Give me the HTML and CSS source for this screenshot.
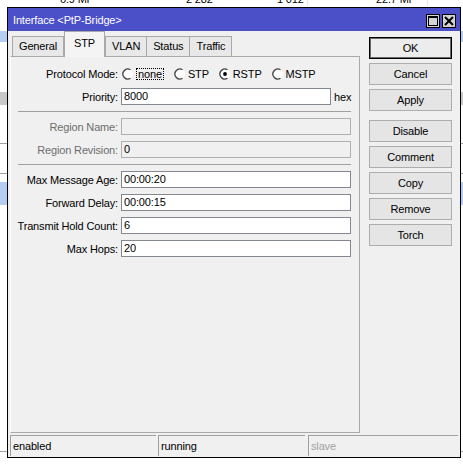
FILE: index.html
```html
<!DOCTYPE html>
<html>
<head>
    <title>Interface &lt;PtP-Bridge&gt;</title>
    <link rel="stylesheet" href="styles.css">
</head>

<body>

    <!-- interface list behind the dialog -->
    <div class="desk">
        <div class="desk-row desk-head">
            <span class="cell c1">6.9 Mi</span>
            <span class="cell c2">2 282</span>
            <span class="cell c3">1 012</span>
            <span class="cell c4">22.7 Mi</span>
        </div>
        <div class="desk-row gap-25"></div>
        <div class="desk-row band-blue h-11"></div>
        <div class="desk-row gap-50"></div>
        <div class="desk-row band-gray h-13"></div>
        <div class="desk-row gap-38 lined"></div>
        <div class="desk-row gap-29 lined"></div>
        <div class="desk-row gap-8"></div>
        <div class="desk-row band-blue h-23"></div>
        <div class="desk-row gap-246 lined"></div>
    </div>

    <div class="window">
        <div class="titlebar">
            <span class="title">Interface &lt;PtP-Bridge&gt;</span>
            <div class="title-buttons">
                <span class="tbtn">
                    <svg width="10" height="10" viewBox="0 0 10 10">
                        <rect x="0.5" y="0.5" width="9" height="9" fill="none" stroke="#000" stroke-width="1"/>
                        <rect x="0" y="0" width="10" height="2" fill="#000"/>
                    </svg>
                </span>
                <span class="tbtn">
                    <svg width="10" height="10" viewBox="0 0 10 10">
                        <path d="M1 1 L9 9 M9 1 L1 9" stroke="#000" stroke-width="2" fill="none"/>
                    </svg>
                </span>
            </div>
        </div>

        <div class="main">
            <div class="tabs-area">
                <div class="tabs">
                    <span class="tab">General</span>
                    <span class="tab active">STP</span>
                    <span class="tab">VLAN</span>
                    <span class="tab">Status</span>
                    <span class="tab">Traffic</span>
                </div>

                <div class="panel">
                    <div class="row">
                        <label class="lbl">Protocol Mode:</label>
                        <div class="radios">
                            <span class="opt">
                                <svg class="radio" width="12" height="12" viewBox="0 0 12 12">
                                    <circle cx="6" cy="6" r="5" fill="#fff"/>
                                    <path d="M8.5 1.7 A5 5 0 1 0 8.5 10.3" stroke="#444" stroke-width="1.3" fill="none"/>
                                </svg>
                                <span class="focus">none</span>
                            </span>
                            <span class="opt">
                                <svg class="radio" width="12" height="12" viewBox="0 0 12 12">
                                    <circle cx="6" cy="6" r="5" fill="#fff"/>
                                    <path d="M8.5 1.7 A5 5 0 1 0 8.5 10.3" stroke="#444" stroke-width="1.3" fill="none"/>
                                </svg>
                                STP
                            </span>
                            <span class="opt">
                                <svg class="radio" width="12" height="12" viewBox="0 0 12 12">
                                    <circle cx="6" cy="6" r="5" fill="#fff"/>
                                    <path d="M8.5 1.7 A5 5 0 1 0 8.5 10.3" stroke="#444" stroke-width="1.3" fill="none"/>
                                    <circle cx="6" cy="6" r="1.9" fill="#000"/>
                                </svg>
                                RSTP
                            </span>
                            <span class="opt">
                                <svg class="radio" width="12" height="12" viewBox="0 0 12 12">
                                    <circle cx="6" cy="6" r="5" fill="#fff"/>
                                    <path d="M8.5 1.7 A5 5 0 1 0 8.5 10.3" stroke="#444" stroke-width="1.3" fill="none"/>
                                </svg>
                                MSTP
                            </span>
                        </div>
                    </div>

                    <div class="row">
                        <label class="lbl">Priority:</label>
                        <div class="field short">8000</div>
                        <span class="unit">hex</span>
                    </div>

                    <div class="sep"></div>

                    <div class="row">
                        <label class="lbl disabled">Region Name:</label>
                        <div class="field off"></div>
                    </div>
                    <div class="row">
                        <label class="lbl disabled">Region Revision:</label>
                        <div class="field off">0</div>
                    </div>

                    <div class="sep"></div>

                    <div class="row">
                        <label class="lbl">Max Message Age:</label>
                        <div class="field">00:00:20</div>
                    </div>
                    <div class="row">
                        <label class="lbl">Forward Delay:</label>
                        <div class="field">00:00:15</div>
                    </div>
                    <div class="row">
                        <label class="lbl">Transmit Hold Count:</label>
                        <div class="field">6</div>
                    </div>
                    <div class="row">
                        <label class="lbl">Max Hops:</label>
                        <div class="field">20</div>
                    </div>
                </div>
            </div>

            <div class="buttons">
                <button class="btn default">OK</button>
                <button class="btn">Cancel</button>
                <button class="btn">Apply</button>
                <button class="btn spaced">Disable</button>
                <button class="btn">Comment</button>
                <button class="btn">Copy</button>
                <button class="btn">Remove</button>
                <button class="btn">Torch</button>
            </div>
        </div>

        <div class="statusbar">
            <div class="status s1">enabled</div>
            <div class="status s2">running</div>
            <div class="status s3 dim">slave</div>
        </div>
    </div>

</body>
</html>
```

FILE: styles.css
```css
/* Base */
body {
    margin: 0;
    padding: 0;
    background: #fff;
    font-family: 'Liberation Sans', Arial, sans-serif;
    font-size: 11px;
    letter-spacing: -0.15px;
    color: #000;
    overflow: hidden;
}

/* List behind the dialog */
.desk {
    display: flex;
    flex-direction: column;
}

.desk-row {
    flex: none;
}

.desk-head {
    position: relative;
    height: 12px;
    margin-top: -6px;
    line-height: 10px;
    color: #000;
}

.cell {
    position: absolute;
    top: 0;
}

.c1 { left: 60px; }
.c2 { left: 186px; }
.c3 { left: 277px; }
.c4 { left: 376px; }

.desk-head::before,
.desk-head::after {
    content: "";
    position: absolute;
    top: 0;
    bottom: 0;
    width: 1px;
    background: #e4e4e4;
}

.desk-head::before { left: 307px; }
.desk-head::after { left: 427px; }

.gap-25 { height: 25px; }
.gap-50 { height: 50px; }
.gap-38 { height: 38px; }
.gap-29 { height: 29px; }
.gap-8 { height: 8px; }
.gap-246 { height: 246px; }
.h-11 { height: 11px; }
.h-13 { height: 13px; }
.h-23 { height: 23px; }

.band-blue { background: #b3cdf2; }
.band-gray { background: #c8c8c8; }
.lined { border-bottom: 1px solid #a0a0a0; }

/* Dialog window */
.window {
    position: absolute;
    left: 7px;
    top: 7px;
    width: 452px;
    height: 449px;
    border: 1px solid #000;
    background: #f0f0f0;
    display: flex;
    flex-direction: column;
}

.titlebar {
    height: 23px;
    background: #4b4fc8;
    display: flex;
    align-items: center;
    justify-content: space-between;
    padding: 0 4px 0 5px;
    flex: none;
}

.title {
    color: #fff;
    font-size: 11px;
}

.title-buttons {
    display: flex;
    gap: 2px;
    margin-top: 3px;
}

.tbtn {
    width: 12px;
    height: 12px;
    border: 1px solid #000;
    background: #d4d4d4;
    display: flex;
    align-items: center;
    justify-content: center;
}

/* Main area */
.main {
    display: flex;
    height: 402px;
    padding-left: 2px;
    flex: none;
}

.tabs-area {
    width: 350px;
    display: flex;
    flex-direction: column;
}

.tabs {
    height: 25px;
    display: flex;
    align-items: flex-end;
    padding-left: 2px;
    position: relative;
    z-index: 1;
}

.tab {
    height: 19px;
    line-height: 18px;
    padding: 0 6px;
    background: #e8e8e8;
    border: 1px solid #a9a9a9;
    border-bottom: none;
    margin-right: -1px;
}

.tab.active {
    height: 25px;
    line-height: 22px;
    padding: 0 9px;
    background: #f4f4f4;
    margin: 0 0 -1px 1px;
    border-color: #a9a9a9;
}

.panel {
    flex: 1;
    border: 1px solid #a9a9a9;
    border-left-color: #fff;
    background: #f0f0f0;
    padding: 8px 8px 0 0;
}

.row {
    display: flex;
    align-items: center;
    height: 17px;
    margin-bottom: 6px;
}

.lbl {
    width: 107px;
    text-align: right;
    margin-right: 3px;
    flex: none;
}

.lbl.disabled {
    color: #6d6d6d;
}

.field {
    flex: 1;
    height: 15px;
    line-height: 15px;
    border: 1px solid #828790;
    background: #fff;
    padding: 0 2px;
}

.field.short {
    flex: none;
    width: 204px;
}

.field.off {
    background: #f0f0f0;
    border-color: #b0b0b0;
}

.unit {
    margin-left: 3px;
}

.sep {
    margin: 1px 0 6px 7px;
    border-top: 1px solid #a0a0a0;
}

/* Radio group */
.radios {
    display: flex;
    align-items: center;
    margin-left: 1px;
}

.opt {
    display: flex;
    align-items: center;
    margin-right: 10px;
}

.radio {
    margin-right: 2px;
}

.focus {
    border: 1px dotted #000;
    padding: 0 1px;
    line-height: 10px;
}

/* Right column buttons */
.buttons {
    width: 83px;
    margin-left: 9px;
    padding-top: 6px;
    display: flex;
    flex-direction: column;
    gap: 4px;
}

.btn {
    height: 22px;
    padding: 0;
    font-family: 'Liberation Sans', Arial, sans-serif;
    font-size: 11px;
    letter-spacing: -0.15px;
    color: #000;
    background: #e5e5e5;
    border: 1px solid #adadad;
}

.btn.default {
    border: 1px solid #000;
    box-shadow: inset 0 0 0 1px #6a6a6a;
    background: #ececec;
}

.btn.spaced {
    margin-top: 5px;
}

/* Status bar */
.statusbar {
    display: flex;
    gap: 2px;
    padding: 2px 0 0 2px;
    height: 21px;
}

.status {
    height: 20px;
    line-height: 20px;
    border-top: 1px solid #a0a0a0;
    border-left: 1px solid #a0a0a0;
    padding-left: 2px;
}

.s1 { width: 143px; }
.s2 { width: 144px; }
.s3 { width: 147px; margin-left: 1px; }

.dim { color: #a0a0a0; }
```
